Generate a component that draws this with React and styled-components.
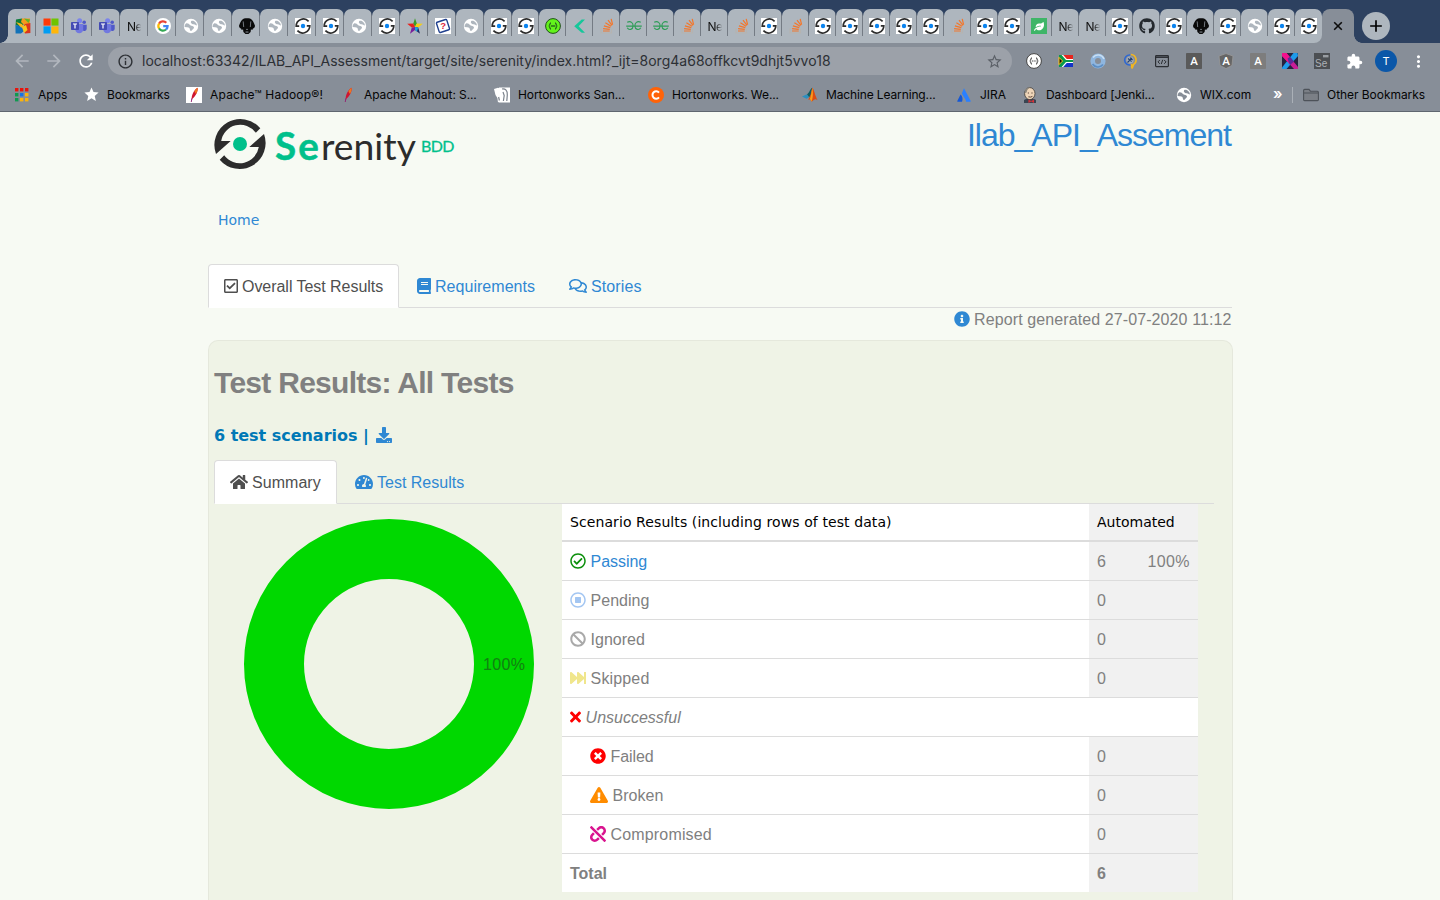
import React from "react";
import styled, { createGlobalStyle, css } from "styled-components";
import {
  FaRegCheckSquare, FaBook, FaRegComments, FaInfoCircle, FaDownload, FaHome,
  FaTachometerAlt, FaRegCheckCircle, FaRegStopCircle, FaBan, FaFastForward,
  FaTimes, FaTimesCircle, FaExclamationTriangle, FaUnlink, FaGithub, FaLeaf,
} from "react-icons/fa";
import {
  MdArrowBack, MdArrowForward, MdRefresh, MdAdd, MdStarBorder, MdStar,
  MdMoreVert, MdExtension, MdInfoOutline,
} from "react-icons/md";

const color = {
  strip: "#2d4160",
  tab: "#aeb6be",
  toolbar: "#878e98",
  address: "#9ca1a9",
  page: "#f7faf3",
  panel: "#eff3e6",
  link: "#2f88d3",
  text: "#808080",
  line: "#dcdcdc",
};

const GlobalStyle = createGlobalStyle`
  * { box-sizing: border-box; }
  body { margin: 0; background: ${color.page}; overflow: hidden; }
`;

const Screen = styled.div`
  width: 1440px;
  height: 900px;
  overflow: hidden;
  display: flex;
  flex-direction: column;
  background: ${color.page};
  font-family: "Liberation Sans", Arial, sans-serif;
  font-size: 16px;
  color: ${color.text};
`;

/* ---------- browser chrome ---------- */

const TabStrip = styled.div`
  height: 43px;
  flex: none;
  display: flex;
  padding-top: 9px;
  background: ${color.strip};
`;

const Flare = styled.div`
  width: 8px;
  align-self: flex-end;
  height: 8px;
  background: radial-gradient(circle at ${(p) => (p.$side === "left" ? "0 0" : "100% 0")}, transparent 7.5px, ${(p) => p.$fill} 8px);
`;

const TabCell = styled.div`
  width: ${(p) => p.$w}px;
  height: 34px;
  flex: none;
  display: flex;
  ${(p) => p.$last && css`background: linear-gradient(transparent 50%, ${color.toolbar} 50%);`}
`;

const Tab = styled.div`
  flex: 1;
  display: flex;
  align-items: center;
  justify-content: center;
  padding-left: 1px;
  border-radius: 7px 7px ${(p) => (p.$last ? "8px" : 0)} 0;
  background: ${(p) => (p.$last ? "none" : "linear-gradient(#747b84, #747b84) right 4px / 1px 23px no-repeat")}, ${color.tab};
  background-color: ${color.tab};
`;

const ActiveTab = styled.div`
  width: 32px;
  height: 34px;
  display: flex;
  align-items: center;
  justify-content: center;
  border-radius: 8px 8px 0 0;
  background: ${color.toolbar};
`;

const NewTab = styled.div`
  width: 28px;
  height: 28px;
  margin: 3px 0 0 0;
  display: flex;
  align-items: center;
  justify-content: center;
  border-radius: 50%;
  background: ${color.tab};
  color: #000;
`;

const TabText = styled.span`
  white-space: nowrap;
  font: 12px Inter, sans-serif;
  letter-spacing: -0.4px;
  color: #111;
  mask-image: linear-gradient(90deg, #000 55%, transparent 95%);
`;

const Toolbar = styled.div`
  height: 36px;
  flex: none;
  display: flex;
  align-items: center;
  background: ${color.toolbar};
`;

const NavButtons = styled.div`
  width: 108px;
  display: flex;
  align-items: center;
  gap: 12px;
  padding-left: 12px;
`;

const NavButton = styled.div`
  width: 20px;
  height: 20px;
  display: flex;
  color: ${(p) => (p.$off ? "#b2b7be" : "#fff")};
`;

const AddressBar = styled.div`
  width: 904px;
  height: 28px;
  display: flex;
  align-items: center;
  gap: 8px;
  padding: 0 9px 0 9px;
  border-radius: 14px;
  background: ${color.address};
  color: #2d3035;
`;

const Url = styled.span`
  flex: 1;
  white-space: nowrap;
  padding-bottom: 2px;
  font: 14px Inter, sans-serif;
  letter-spacing: ${(p) => p.$ls}px;
`;

const Extensions = styled.div`
  display: flex;
  padding-left: 6px;
`;

const Extension = styled.div`
  width: 32px;
  height: 28px;
  display: flex;
  align-items: center;
  justify-content: center;
  color: #fff;
`;

const Avatar = styled.div`
  width: 22px;
  height: 22px;
  border-radius: 50%;
  background: #0b57a8;
  color: #fff;
  font: 11px/22px Inter, sans-serif;
  text-align: center;
`;

const BookmarksBar = styled.div`
  height: 33px;
  flex: none;
  display: flex;
  align-items: center;
  padding: 0 0 1px 14px;
  border-bottom: 1px solid #5f666f;
  background: ${color.toolbar};
`;

const Bookmark = styled.div`
  width: ${(p) => p.$w}px;
  flex: none;
  display: flex;
  align-items: center;
  gap: ${(p) => p.$gap || 8}px;
  font: 12px Inter, sans-serif;
  letter-spacing: ${(p) => p.$ls || 0}px;
  white-space: nowrap;
  color: #050505;
`;

const BarDivider = styled.div`
  width: 1px;
  height: 16px;
  margin: 0 10px 0 9px;
  background: #aab0b7;
`;

const More = styled.span`
  width: 11px;
  padding: 0 0 1px 1px;
  font: 600 15px/16px Inter, sans-serif;
  color: #fff;
`;

/* ---------- small drawings ---------- */

const Art = ({ size = 16, box = 16, children }) => (
  <svg width={size} height={size} viewBox={`0 0 ${box} ${box}`} style={{ flex: "none", display: "block" }}>{children}</svg>
);

const CloseIcon = () => (
  <Art><path d="M4.2 4.2L11.8 11.8M11.8 4.2L4.2 11.8" stroke="#0c0c0c" strokeWidth="1.6" /></Art>
);

const RING = "M46.3 10.3A26 26 0 0 0 2 36L16.7 23H7.2A19.2 19.2 0 0 1 41.8 14.8Z";

const Mark = ({ dot, r = 7 }) => (
  <g fill="#2c2c2c">
    <path d={RING} />
    <path d={RING} transform="rotate(180 26 26)" />
    <circle cx="26" cy="26" r={r} fill={dot} />
  </g>
);

const SMALL_RING = "M13.6 3.3A7.2 7.2 0 0 0 1.2 8.2H4.2";

const SerenityIcon = () => (
  <Art>
    <rect width="16" height="16" fill="#fff" />
    <g fill="none" stroke="#2c2c2c" strokeWidth="1.7">
      <path d={SMALL_RING} />
      <path d={SMALL_RING} transform="rotate(180 8 8)" />
    </g>
    <circle cx="8" cy="8" r="2.2" fill="#0a84f0" />
  </Art>
);
const Globe = ({ land = color.tab }) => (
  <Art>
    <circle cx="8" cy="8" r="7.2" fill="#fff" />
    <path d="M3 5.5C4.5 4.8 6 6 7.2 7.2C8.6 8.2 10.5 7.6 11 9.2C11.2 10.8 9.3 11.2 8.8 12.6C8 13.6 6.8 12.8 6.9 11.6C6.8 10 5.6 9.2 4 9.3L1.6 9C1.4 7.7 2 6.2 3 5.5Z" fill={land} />
    <path d="M8.2 3C9.8 2.4 11.6 3.2 12.6 4.4C13.6 5.4 14 6.6 13.8 7.6C12.6 7.4 12 6.4 10.8 6.3C9.4 6.2 8 5.4 7.8 4.2Z" fill={land} />
  </Art>
);
const Stack = () => (
  <Art>
    <path d="M2 10.5V15H12.5V10.5" fill="none" stroke="#b5b3b0" strokeWidth="1.2" />
    <path d="M4 13H10.7M4.1 10.6L10.8 11.4M4.9 7.8L11.3 9.7M6.4 4.7L12.1 8.3M9 2.1L13 7.3M12.2.8L13.6 6.6" stroke="#f4762a" strokeWidth="1.2" fill="none" />
  </Art>
);
const Google = () => (
  <Art>
    <circle cx="8" cy="8" r="8" fill="#fff" />
    <g fill="none" strokeWidth="2.2">
      <path d="M4 5.6A4.6 4.6 0 0 1 11.3 4.8" stroke="#ea4335" />
      <path d="M4.1 5.5A4.7 4.7 0 0 0 4.1 10.5" stroke="#fbbc05" />
      <path d="M4 10.4A4.6 4.6 0 0 0 11 11.5" stroke="#34a853" />
      <path d="M8.2 8.1H12.6A4.7 4.7 0 0 1 11 11.5" stroke="#4285f4" />
    </g>
  </Art>
);
const Avg = () => (
  <Art>
    <path d="M1 1.5L7 .5L9 6L6 9L.6 7Z" fill="#0d7c3a" />
    <path d="M7 .5H15V6L10 8L6 4Z" fill="#f39a1d" />
    <path d="M15.4 5V15L10 15.5L7 10L10 6Z" fill="#d9361c" />
    <path d="M.4 7L6 8L9 13L6 15.5H.6Z" fill="#1372b8" />
    <path d="M1 4L7 6L9 9L6 9.5Z" fill="#f6b91c" /><path d="M7 9L11 7L12.5 12L9 15Z" fill="#f4c81e" />
    <path d="M9 .6L15 1.4L13.5 5Z" fill="#61b22c" />
  </Art>
);
const Microsoft = () => (
  <Art>
    <path d="M.5.5H7.6V7.6H.5Z" fill="#ff3a08" /><path d="M8.4.5H15.5V7.6H8.4Z" fill="#6fc400" />
    <path d="M.5 8.4H7.6V15.5H.5Z" fill="#009df3" /><path d="M8.4 8.4H15.5V15.5H8.4Z" fill="#ffb60a" />
  </Art>
);
const Teams = () => (
  <Art>
    <circle cx="13.2" cy="4.3" r="1.8" fill="#5059c9" /><circle cx="8.6" cy="2.8" r="2.5" fill="#7b83eb" />
    <path d="M11.5 6.7H15.7V11A2.3 2.3 0 0 1 11.5 12Z" fill="#5059c9" />
    <path d="M4.3 6H12.2V11.8A4 4 0 0 1 4.3 11.8Z" fill="#7178e0" />
    <rect x="0" y="4" width="8" height="8" rx=".8" fill="#444bb4" />
    <path d="M2 6H6M4 6V10.4" stroke="#fff" strokeWidth="1.2" />
  </Art>
);
const Dog = () => (
  <Art>
    <path d="M5 .5C7 0 9 0 11 .5C13.2 1.4 14.8 4 16 7.8C15.8 9.6 15 10.4 13.8 10.8C13.4 12.6 12.6 12 12 11L11.6 14L9.5 16H6.5L4.4 14L4 11C3.4 12 2.6 12.6 2.2 10.8C1 10.4.2 9.6 0 7.8C1.2 4 2.8 1.4 5 .5Z" fill="#0a0a0a" />
    <path d="M4.2 3.4L4.7 9M11.8 3.4L11.3 9M7 11.4H9M7.2 13.2V15M8.8 13.2V15" stroke="#8d949c" strokeWidth=".8" />
  </Art>
);
const Star = () => (
  <Art>
    <path d="M8 9L6.3 5.6L8 .2L9.8 5.6Z" fill="#3a9d27" /><path d="M8 9L9.8 5.6L15.8 5.8L11.2 9.4Z" fill="#f5cf12" />
    <path d="M8 9L11.2 9.4L13 15.8L8 12Z" fill="#1d2b6b" /><path d="M8 9V12L3 15.8L4.8 9.4Z" fill="#7a1f9b" />
    <path d="M8 9L4.8 9.4L.2 5.8L6.3 5.6Z" fill="#e8201c" /><path d="M8 9V12L10 13.4L11.2 9.4Z" fill="#1ba3e0" />
  </Art>
);
const Question = () => (
  <Art>
    <rect width="16" height="16" fill="#fff" />
    <rect x="2.6" y="2.6" width="10.8" height="10.8" rx="1" fill="none" stroke="#20408f" strokeWidth="1.4" transform="rotate(-18 8 8)" />
    <text x="5.2" y="11.4" fontFamily="Liberation Sans" fontWeight="700" fontSize="9.5" fill="#e0243a">?</text>
  </Art>
);
const Swagger = ({ mono }) => (
  <Art>
    <circle cx="8" cy="8" r="7.4" fill={mono ? "#fff" : "#62f31c"} stroke={mono ? "#444" : "#22501c"} strokeWidth="1" />
    <path d="M6 4.6C4.6 4.6 5.4 7.4 3.8 8C5.4 8.6 4.6 11.4 6 11.4M10 4.6C11.4 4.6 10.6 7.4 12.2 8C10.6 8.6 11.4 11.4 10 11.4" fill="none" stroke={mono ? "#333" : "#173b1c"} strokeWidth="1" />
    <path d="M5.8 8H10.4" stroke={mono ? "#333" : "#173b1c"} strokeWidth="1.1" strokeDasharray={mono ? "1.1 .7" : "none"} />
  </Art>
);
const Katalon = () => (
  <Art><path d="M13 1.5H9.7L2.2 8.3L9.7 14.8H13L6.6 8.3Z" fill="#16c79a" /></Art>
);
const Geeks = () => (
  <Art>
    <path d="M.2 8.1H15.8M1.2 4.2C5 2.6 7.2 5 7.1 8C7 11.6 3 12.8 1.2 9.8M14.8 4.2C11 2.6 8.8 5 8.9 8C9 11.6 13 12.8 14.8 9.8" fill="none" stroke="#2f9d58" strokeWidth="1.15" />
  </Art>
);
const Leaf = () => (
  <Art><rect width="16" height="16" fill="#3fb568" /><g transform="translate(3 3.4)"><FaLeaf size="10" color="#fff" /></g></Art>
);
const Apps = () => (
  <Art>
    {["#e8140c", "#e8140c", "#e8140c", "#109a50", "#1573e6", "#fbb30c", "#109a50", "#fbb30c", "#fbb30c"].map((c, i) => (
      <rect key={i} x={1 + (i % 3) * 5} y={1 + Math.floor(i / 3) * 5} width="3.4" height="3.4" fill={c} />
    ))}
  </Art>
);
const Feather = ({ tile }) => (
  <Art>
    {tile && <rect width="16" height="16" fill="#fff" />}
    <path d="M11.5.8C12.6 3.2 9.5 9.8 6.4 11.8L5.4 15L4.8 15L5.7 11C6 7 8.5 2.6 11.5.8Z" fill="#cf1531" />
    <path d="M11.5.8C12.2 2.8 11 5.4 10 7L8.4 4.5C9.2 2.8 10.2 1.6 11.5.8Z" fill="#f0761f" />
    <path d="M6.4 11.8L5.4 15L4.8 15L5.7 11Z" fill="#7c2a8c" />
  </Art>
);
const Elephants = () => (
  <Art>
    <rect x="5" y=".5" width="11" height="15" fill="#fff" />
    <path d="M0 2L4 .8L8 2.2L8.4 8L7 9.5L6.6 14L4 15.5L3.4 11L1.5 8Z" fill="#fff" />
    <path d="M8 2C11.5 1.5 13.6 3.5 13.3 8L12.8 14M9 5L10.2 8.6L9.4 14M4.6 10L5.4 13.5" fill="none" stroke="#7b828c" strokeWidth="1.2" />
  </Art>
);
const Cloudera = () => (
  <Art><circle cx="8" cy="8" r="8" fill="#ff6308" /><path d="M11 5.6A3.7 3.7 0 1 0 11 10.4" fill="none" stroke="#fff" strokeWidth="2" /></Art>
);
const Matlab = () => (
  <Art>
    <path d="M0 9.5L5 7.2L7.2 10.3L4.5 11.8Z" fill="#2c8fc0" /><path d="M5 7.2C7 6.5 8 2 10.2.8L9 8L7.2 10.3Z" fill="#0f5f63" />
    <path d="M10.2.8C12 2 13 9 15.6 13.2C13.5 11.5 12 12 9.8 14.8C9.2 13 8 12 6 12.6C8.4 10 9.4 4.5 10.2.8Z" fill="#dd4c12" />
    <path d="M10.2.8C11 4 11.4 8 9.8 14.8C9.2 13 8.4 12.4 7.8 12.4C9 9 9.8 5 10.2.8Z" fill="#f9a01b" />
  </Art>
);
const Jira = () => (
  <Art><path d="M4.6 7.6C6.6 9.6 7 12 6 14.8H1.6Q1 14.8 1.3 14.1Z" fill="#1458d6" /><path d="M8 1.2L14.7 14.1Q14.9 14.8 14.2 14.8H10C10.2 12.4 7.6 10.4 5.8 6.6Z" fill="#2a80ff" /></Art>
);
const Jenkins = () => (
  <Art>
    <path d="M2 13C5 11 11 11 14 13V16H2Z" fill="#3a4552" />
    <ellipse cx="7.8" cy="6.6" rx="5.2" ry="6" fill="#eed5b8" stroke="#3e3a36" strokeWidth=".8" />
    <path d="M3 6C2.6 2.4 5 .4 8 .6C6 1.6 5 3 4.6 5.6Z" fill="#8b867c" />
    <path d="M9.4 6H10.6M5.8 6H7M6.4 9.8Q8.6 10.6 10.4 9.4" stroke="#4b342a" strokeWidth=".9" fill="none" />
    <path d="M6.4 12.6L9.2 14L12 12.6V16L9.2 14.6L6.4 16Z" fill="#d0333a" />
  </Art>
);
const Folder = () => (
  <Art><path d="M.6 3.4Q.6 2.4 1.6 2.4H6L7.4 4.2H14.4Q15.4 4.2 15.4 5.2V12.8Q15.4 13.6 14.5 13.6H1.5Q.6 13.6.6 12.8ZM.6 6H15.4" fill="#7b7f86" stroke="#4d5259" strokeWidth="1.1" /></Art>
);
const Flag = () => (
  <Art>
    <rect x="1" y="2" width="14" height="6" fill="#e8251d" /><rect x="1" y="8" width="14" height="6" fill="#1433c8" />
    <path d="M1 2H5.2L8.8 6H15V10H8.8L5.2 14H1Z" fill="#fff" />
    <path d="M1 2H3.6L8 6.9H15V9.1H8L3.6 14H1Z" fill="#0b9a4a" />
    <path d="M1 4.4L4.6 8L1 11.6Z" fill="#111" stroke="#ffc619" strokeWidth="1" />
  </Art>
);
const RingIcon = () => (
  <Art><circle cx="8" cy="8" r="5.3" fill="none" stroke="#8fb6df" strokeWidth="4.6" /><path d="M3 4.5A6.4 6.4 0 0 1 14 6" fill="none" stroke="#c9dff3" strokeWidth="1.6" /><path d="M13 11.5A6.4 6.4 0 0 1 2.6 11" fill="none" stroke="#5c8ec4" strokeWidth="1.6" /></Art>
);
const Lens = () => (
  <Art><path d="M8 2A5 5 0 1 0 9 11.8" fill="none" stroke="#2d67d3" strokeWidth="1.6" /><path d="M9 1.5A5.4 5.4 0 0 1 11.6 11.4L10 15.5L9.4 11" fill="none" stroke="#f2b61f" strokeWidth="1.7" /><circle cx="8" cy="7" r="3.6" fill="#a5adb8" /><path d="M5.5 9.5L10 5M6 5.5L9.6 8.6M8 4.6L10.6 7" stroke="#27436e" strokeWidth="1.1" /></Art>
);
const Code = () => (
  <Art><rect x="1.6" y="2.6" width="12.8" height="11" rx=".8" fill="none" stroke="#2b2e33" strokeWidth="1.2" /><path d="M1.6 4.2H14.4" stroke="#2b2e33" strokeWidth="1.5" /><path d="M5.8 7L4 8.9L5.8 10.8M10.2 7L12 8.9L10.2 10.8M8.7 6.8L7.3 11" fill="none" stroke="#2b2e33" strokeWidth="1" /></Art>
);
const Letter = ({ fill, shield }) => (
  <Art>
    {shield ? <path d="M8 .6L15 3L14 12.4L8 15.6L2 12.4L1 3Z" fill="#666" stroke="#999" strokeWidth=".8" /> : <rect width="16" height="16" rx=".8" fill={fill} />}
    <text x="8" y="11.9" textAnchor="middle" fontFamily="Roboto" fontWeight="500" fontSize="11.5" fill="#fff">A</text>
  </Art>
);
const Cross = () => (
  <Art>
    <rect width="16" height="16" fill="#25233e" />
    <path d="M15.5 0L16 3L4.5 16H0V14.5L11.5 0Z" fill="#1f9bea" />
    <path d="M0 0H4.5L16 14V16H12L0 3Z" fill="#c81d96" />
    <path d="M0 0H4.5L8 4.3L5.6 8.8L0 3Z" fill="#f2118c" />
    <path d="M5.5 5.5L8 3.8L12 8.5L8 12Z" fill="#5b2a9a" />
  </Art>
);
const Selenium = () => (
  <Art><rect width="16" height="16" fill="#4c4f53" /><rect x="9" y="2" width="5.5" height="2.4" fill="#999da2" /><text x="1" y="14" fontFamily="Liberation Sans" fontSize="10" fill="#adb1b6">Se</text></Art>
);

const icons = {
  avg: <Avg />, ms: <Microsoft />, teams: <Teams />, text: <TabText>Ne</TabText>, google: <Google />,
  globe: <Globe />, dog: <Dog />, ser: <SerenityIcon />, star: <Star />, q: <Question />, swag: <Swagger />,
  kat: <Katalon />, so: <Stack />, gfg: <Geeks />, leaf: <Leaf />, git: <FaGithub size={16} color="#24292e" />,
};
const tabs = (
  "avg ms teams teams text google globe globe dog globe ser ser globe ser star q globe ser " +
  "ser swag kat so gfg gfg so text so ser so ser ser ser ser ser so ser ser leaf text text ser git ser dog ser globe ser ser"
).split(" ");

const bookmarks = [
  [69, <Apps />, "Apps", 0],
  [103, <MdStar size={17} color="#fff" />, "Bookmarks", -0.1, 7],
  [154, <Feather tile />, "Apache™ Hadoop®!", 0.2],
  [154, <Feather />, "Apache Mahout: S...", -0.1],
  [154, <Elephants />, "Hortonworks San...", -0.1],
  [154, <Cloudera />, "Hortonworks. We...", -0.1],
  [154, <Matlab />, "Machine Learning...", -0.13],
  [66, <Jira />, "JIRA", 0],
  [154, <Jenkins />, "Dashboard [Jenki...", -0.1],
  [96, <Globe land={color.toolbar} />, "WIX.com", 0],
];

const Browser = () => (
  <>
    <TabStrip>
      <Flare $side="left" $fill={color.tab} />
      {tabs.map((t, i) => {
        const last = i === tabs.length - 1;
        return (
          <TabCell key={i} $w={i < 18 ? 28 : 27} $last={last}><Tab $last={last}>{icons[t]}</Tab></TabCell>
        );
      })}
      <ActiveTab><CloseIcon /></ActiveTab>
      <Flare $side="right" $fill={color.toolbar} />
      <NewTab><MdAdd size={20} /></NewTab>
    </TabStrip>
    <Toolbar>
      <NavButtons>
        <NavButton $off><MdArrowBack size={20} /></NavButton>
        <NavButton $off><MdArrowForward size={20} /></NavButton>
        <NavButton><MdRefresh size={20} /></NavButton>
      </NavButtons>
      <AddressBar>
        <MdInfoOutline size={17} />
        <Url $ls={0.015}>localhost:63342/ILAB_API_Assessment/target/site/serenity/index.html?_ijt=8org4a68offkcvt9dhjt5vvo18</Url>
        <MdStarBorder size={17} color="#5b6067" />
      </AddressBar>
      <Extensions>
        <Extension><Swagger mono /></Extension>
        <Extension><Flag /></Extension>
        <Extension><RingIcon /></Extension>
        <Extension><Lens /></Extension>
        <Extension><Code /></Extension>
        <Extension><Letter fill="#5a5a5a" /></Extension>
        <Extension><Letter shield /></Extension>
        <Extension><Letter fill="#7d7d7d" /></Extension>
        <Extension><Cross /></Extension>
        <Extension><Selenium /></Extension>
        <Extension><MdExtension size={17} /></Extension>
        <Extension><Avatar>T</Avatar></Extension>
        <Extension><MdMoreVert size={19} /></Extension>
      </Extensions>
    </Toolbar>
    <BookmarksBar>
      {bookmarks.map(([w, icon, label, ls, gap]) => (
        <Bookmark key={label} $w={w} $ls={ls} $gap={gap}>{icon}<span>{label}</span></Bookmark>
      ))}
      <More>»</More>
      <BarDivider />
      <Bookmark $w={130} $ls={-0.05}><Folder /><span>Other Bookmarks</span></Bookmark>
    </BookmarksBar>
  </>
);

/* ---------- report ---------- */

const Report = styled.main`
  width: 1025px;
  margin-left: 208px;
  flex: 1;
  display: flex;
  flex-direction: column;
`;

const Header = styled.header`
  height: 92px;
  flex: none;
  display: flex;
  justify-content: space-between;
  padding: 6px 2px 0 6px;
`;

const ProjectTitle = styled.h1`
  margin: -2px 0 0;
  font-size: 32px;
  line-height: 38px;
  font-weight: 400;
  letter-spacing: -1px;
  color: ${color.link};
`;

const Breadcrumb = styled.div`
  height: 60px;
  flex: none;
  padding: 7px 0 0 10px;
  font: 14px/18px "DejaVu Sans", sans-serif;
  color: ${color.link};
`;

const NavTabs = styled.nav`
  display: flex;
  flex: none;
  height: 44px;
  width: ${(p) => p.$w}px;
  box-shadow: inset 0 -1px ${color.line};
`;

const NavTab = styled.div`
  width: ${(p) => p.$w}px;
  display: flex;
  align-items: center;
  gap: 4px;
  margin-left: ${(p) => (p.$active ? 0 : 2)}px;
  padding: 1px 0 0 15px;
  border: 1px solid transparent;
  letter-spacing: ${(p) => p.$ls || 0}px;
  white-space: nowrap;
  color: ${color.link};
  ${(p) => p.$active && css`
    color: #4f4f4f;
    background: #fff;
    border-color: ${color.line};
    border-bottom-color: #fff;
    border-radius: 4px 4px 0 0;
  `}
`;

const Glyph = styled.span`
  display: inline-flex;
  flex: none;
  width: ${(p) => p.$w || 16}px;
  height: 16px;
  color: ${(p) => p.$c || "inherit"};
  svg { width: 100%; height: 100%; }
`;

const TabGlyph = styled(Glyph)`
  margin-bottom: 2px;
`;

const Generated = styled.div`
  height: 32px;
  flex: none;
  display: flex;
  justify-content: flex-end;
  align-items: flex-start;
  gap: 4px;
  padding: 3px 1.5px 0 0;
  line-height: 18px;
  letter-spacing: ${(p) => p.$ls}px;
`;

const Panel = styled.section`
  flex: 1;
  display: flex;
  flex-direction: column;
  padding: 23px 0 0 5px;
  border: 1px solid #e5e8dc;
  border-bottom: 0;
  border-radius: 10px 10px 0 0;
  background: ${color.panel};
`;

const PanelTitle = styled.h2`
  margin: 0;
  font-size: 30px;
  line-height: 38px;
  letter-spacing: ${(p) => p.$ls}px;
`;

const Scenarios = styled.div`
  height: 58px;
  padding-top: 24px;
  display: flex;
  gap: 7px;
  font: 700 16px/20px "DejaVu Sans", sans-serif;
  color: #0078b6;
  white-space: nowrap;
`;

const ScenarioText = styled.span`
  letter-spacing: ${(p) => p.$ls}px;
`;

const DownloadLink = styled.span`
  display: flex;
  padding-top: 1px;
`;

const Columns = styled.div`
  display: flex;
`;

const ChartArea = styled.div`
  width: 348px;
  padding: 15px 0 0 30px;
`;

const Table = styled.div`
  width: 636px;
  background: #fff;
`;

const Row = styled.div`
  display: flex;
  height: ${(p) => (p.$first ? 38 : 39)}px;
  border-top: ${(p) => (p.$first ? 0 : 1)}px solid ${color.line};
  font-weight: ${(p) => (p.$bold ? 700 : 400)};
  font-style: ${(p) => (p.$italic ? "italic" : "normal")};
`;

const HeadRow = styled(Row)`
  border-bottom: 2px solid ${color.line};
  font: 14px "DejaVu Sans", sans-serif;
  color: #000;
`;

const NameCell = styled.div`
  flex: 1;
  display: flex;
  align-items: center;
  gap: 4.6px;
  padding-left: ${(p) => (p.$indent ? 28 : 8)}px;
  letter-spacing: ${(p) => p.$ls || 0}px;
  color: ${(p) => (p.$link ? color.link : "inherit")};
`;

const CountCell = styled.div`
  width: 109px;
  display: flex;
  align-items: center;
  justify-content: space-between;
  padding: 0 8px;
  background: #f1f1f1;
`;

const Label = styled.span`
  padding-top: 2px;
  letter-spacing: ${(p) => (p.$wide ? "0.4px" : "inherit")};
`;

const rows = [
  { name: "Passing", icon: <FaRegCheckCircle />, c: "#0a8f0a", n: 6, pct: "100%", link: true, ls: -0.05 },
  { name: "Pending", icon: <FaRegStopCircle />, c: "#a3c6f2", n: 0, ls: 0 },
  { name: "Ignored", icon: <FaBan />, c: "#a9a9a9", n: 0, ls: 0 },
  { name: "Skipped", icon: <FaFastForward />, c: "#f0e68c", n: 0, ls: 0.15 },
  { name: "Unsuccessful", icon: <FaTimes />, c: "#f00", w: 11, italic: true, ls: 0 },
  { name: "Failed", icon: <FaTimesCircle />, c: "#f00", n: 0, indent: true, ls: -0.1 },
  { name: "Broken", icon: <FaExclamationTriangle />, c: "#ff8c00", w: 18, n: 0, indent: true },
  { name: "Compromised", icon: <FaUnlink />, c: "#d9148f", n: 0, indent: true, ls: 0.15 },
  { name: "Total", n: 6, bold: true },
];

const Logo = () => (
  <svg width="242" height="60" viewBox="0 0 242 60">
    <Mark dot="#00c08b" />
    <g fontFamily="Lato">
      <text x="61" y="42" fontSize="38.5" fontWeight="700" fill="#00c08b" stroke="#00c08b" strokeWidth=".5" letterSpacing="2.2">Se</text>
      <text x="107" y="42" fontSize="37.3" fill="#2c2c2c">renity</text>
      <text x="207" y="34" fontSize="16" fill="#00c08b" stroke="#00c08b" strokeWidth=".3" letterSpacing="-.6">BDD</text>
    </g>
  </svg>
);

const Donut = () => (
  <svg width="290" height="290" viewBox="0 0 290 290" style={{ display: "block" }}>
    <circle cx="145" cy="145" r="115" fill="none" stroke="#00d800" strokeWidth="60" />
    <text x="260" y="151" textAnchor="middle" fontSize="16" fill="#118011" textLength="42">100%</text>
  </svg>
);

export default function App() {
  return (
    <Screen>
      <GlobalStyle />
      <Browser />
      <Report>
        <Header>
          <Logo />
          <ProjectTitle>Ilab_API_Assement</ProjectTitle>
        </Header>
        <Breadcrumb>Home</Breadcrumb>
        <NavTabs $w={1024}>
          <NavTab $active $w={191} $ls={-0.04}><TabGlyph $w={14}><FaRegCheckSquare /></TabGlyph>Overall Test Results</NavTab>
          <NavTab $w={150} $ls={0.04}><TabGlyph $w={14}><FaBook /></TabGlyph>Requirements</NavTab>
          <NavTab $w={120} $ls={0.1}><TabGlyph $w={18}><FaRegComments /></TabGlyph>Stories</NavTab>
        </NavTabs>
        <Generated $ls={0.1}><Glyph $c={color.link}><FaInfoCircle /></Glyph>Report generated 27-07-2020 11:12</Generated>
        <Panel>
          <PanelTitle $ls={-0.72}>Test Results: All Tests</PanelTitle>
          <Scenarios>
            <ScenarioText $ls={-0.03}>6 test scenarios |</ScenarioText>
            <DownloadLink><Glyph $c={color.link}><FaDownload /></Glyph></DownloadLink>
          </Scenarios>
          <NavTabs $w={1000}>
            <NavTab $active $w={123} $ls={0.05}><TabGlyph $w={18}><FaHome /></TabGlyph>Summary</NavTab>
            <NavTab $w={160} $ls={0}><TabGlyph $w={18}><FaTachometerAlt /></TabGlyph>Test Results</NavTab>
          </NavTabs>
          <Columns>
            <ChartArea><Donut /></ChartArea>
            <Table>
              <HeadRow $first>
                <NameCell $ls={0.09}>Scenario Results (including rows of test data)</NameCell>
                <CountCell>Automated</CountCell>
              </HeadRow>
              {rows.map((r, i) => (
                <Row key={r.name} $first={i === 0} $bold={r.bold} $italic={r.italic}>
                  <NameCell $indent={r.indent} $link={r.link} $ls={r.ls}>
                    {r.icon && <Glyph $c={r.c} $w={r.w}>{r.icon}</Glyph>}
                    <Label>{r.name}</Label>
                  </NameCell>
                  {r.n !== undefined && (
                    <CountCell><Label>{r.n}</Label>{r.pct && <Label $wide>{r.pct}</Label>}</CountCell>
                  )}
                </Row>
              ))}
            </Table>
          </Columns>
        </Panel>
      </Report>
    </Screen>
  );
}
